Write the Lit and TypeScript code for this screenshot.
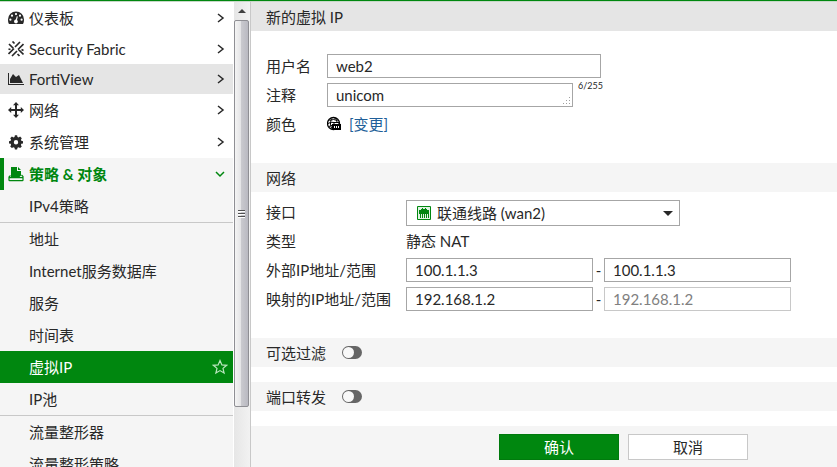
import { LitElement, html, css, svg, nothing } from "lit";
import { customElement, property, state } from "lit/decorators.js";
import { classMap } from "lit/directives/class-map.js";

const icons = {
  dashboard: svg`
    <path fill="currentColor" fill-rule="evenodd" d="M8 1.500a8 8 0 0 0-8 8c0 2 .4 3.500 1 4.500h14c.6-1 1-2.500 1-4.500a8 8 0 0 0-8-8zM8 3a1.100 1.100 0 1 1 0 2.200a1.100 1.100 0 0 1 0-2.200zM4 4.600a1.100 1.100 0 1 1 0 2.200a1.100 1.100 0 0 1 0-2.200zM12 4.600a1.100 1.100 0 1 1 0 2.200a1.100 1.100 0 0 1 0-2.200zM2.400 8.600a1.100 1.100 0 1 1 0 2.200a1.100 1.100 0 0 1 0-2.200zM13.600 8.600a1.100 1.100 0 1 1 0 2.200a1.100 1.100 0 0 1 0-2.200zM8.800 6.200l1 .3-.8 3.400a1.900 1.900 0 1 1-1.200-.3z"/>`,
  fabric: svg`
    <g stroke="currentColor" stroke-width="1.700" fill="none">
      <path d="M12 1L7 6M15.500 3L10 8.500M6 7.500L.5 13M9 10L4 15M1 3l4.500 4.500M4.500 .5l2 2M10.500 8.500L15.500 13.500M9.500 13l2 2M13.500 8.500l2 1M.5 8l2 .5"/>
    </g>`,
  chart: svg`
    <path fill="currentColor" d="M0 2h1v11h15v1H0zM2 12V8l3-5 3 3 3-2 4 8z"/>`,
  move: svg`
    <path fill="currentColor" d="M8 0l3 3.200H9V7h3.800V5L16 8l-3.200 3V9H9v3.800h2L8 16l-3-3.200h2V9H3.200v2L0 8l3.200-3v2H7V3.200H5z"/>`,
  gear: svg`
    <path fill="currentColor" fill-rule="evenodd" d="M6.900 1.200h2.200l.4 1.700 1.100.5 1.500-.9 1.700 1.700-.9 1.500.4 1.100 1.700.4v2.200l-1.700.4-.4 1.100.9 1.500-1.700 1.700-1.500-.9-1.100.5-.4 1.700H6.900l-.4-1.700-1.100-.5-1.500.9-1.700-1.700.9-1.500-.4-1.100L1 9.400V7.200l1.700-.4.4-1.100-.9-1.500 1.700-1.700 1.500.9 1.100-.5zM8 6.100a2.200 2.200 0 1 0 0 4.400 2.200 2.200 0 0 0 0-4.400z"/>`,
  policy: svg`
    <path fill="currentColor" d="M3 1h6v4h4v4.500l-1.500 1.500H3zM10 1l3 3h-3z"/>
    <path fill="none" stroke="currentColor" stroke-width="1.200" d="M2.500 9.500L1 11v3q0 .6.600.6h12.800q.6 0 .6-.6v-3.500L13.500 9M1 11.600h14"/>`,
};

type IconName = keyof typeof icons;

interface NavItem {
  label: string;
  icon: IconName;
  latin?: boolean;
  hover?: boolean;
}

interface SubItem {
  label: string;
  divider?: boolean;
}

const NAV: NavItem[] = [
  { label: "仪表板", icon: "dashboard" },
  { label: "Security Fabric", icon: "fabric", latin: true },
  { label: "FortiView", icon: "chart", latin: true, hover: true },
  { label: "网络", icon: "move" },
  { label: "系统管理", icon: "gear" },
];

const SUB: SubItem[] = [
  { label: "IPv4策略", divider: true },
  { label: "地址" },
  { label: "Internet服务数据库" },
  { label: "服务" },
  { label: "时间表" },
  { label: "虚拟IP" },
  { label: "IP池", divider: true },
  { label: "流量整形器" },
  { label: "流量整形策略" },
];

const base = css`
  * {
    box-sizing: border-box;
  }
  a {
    color: inherit;
    text-decoration: none;
  }
  button,
  input,
  select,
  textarea {
    font: inherit;
    color: inherit;
    margin: 0;
    border-radius: 0;
  }
`;

@customElement("side-nav")
export class SideNav extends LitElement {
  static styles = [
    base,
    css`
      :host {
        display: flex;
        overflow: hidden;
      }
      nav {
        flex: 1;
        min-width: 0;
        overflow: hidden;
        background: #ffffff;
      }
      ul {
        list-style: none;
        margin: 0;
        padding: 0;
      }
      .row {
        display: flex;
        align-items: center;
        height: 32px;
        padding: 0 8px;
        gap: 5px;
      }
      .latin {
        height: 30px;
      }
      .hover {
        background: #e5e5e5;
      }
      .icon {
        width: 16px;
        height: 16px;
        flex: none;
      }
      .label {
        flex: 1;
        white-space: nowrap;
      }
      .chevron {
        width: 8px;
        height: 10px;
        flex: none;
      }
      .chevron-down {
        width: 10px;
        height: 8px;
        flex: none;
      }
      .group {
        background: #f5f5f5;
      }
      .open {
        color: #00870f;
        font-weight: 700;
        border-left: 4px solid #00870f;
        padding-left: 4px;
      }
      .sub {
        padding: 0 4px 0 29px;
      }
      .divider {
        border-bottom: 1px solid #c8c8c8;
      }
      .selected {
        background: #00870f;
        color: #ffffff;
      }
      .star {
        border: 0;
        padding: 0;
        background: none;
        width: 18px;
        height: 18px;
        display: flex;
        align-items: center;
        justify-content: center;
      }
      .bar {
        width: 17px;
        flex: none;
        display: flex;
        flex-direction: column;
        padding: 0 1px;
        background: linear-gradient(90deg, #ffffff 0 1px, #e6e6e6 1px, #f2f2f2);
      }
      .arrow {
        height: 18px;
        display: flex;
        align-items: center;
        justify-content: center;
      }
      .track {
        flex: 1;
        padding-bottom: 60px;
        display: flex;
      }
      .thumb {
        flex: 1;
        display: flex;
        align-items: center;
        justify-content: center;
        border: 1px solid #8f8f94;
        border-radius: 2px;
        background: linear-gradient(90deg, #f4f4f4, #e4e4e6 45%, #c9c9ce 50%, #b9b9c1);
      }
    `,
  ];

  @state() private current = "虚拟IP";

  render() {
    return html`
      <nav aria-label="主菜单">
        <ul>
          ${NAV.map(
            (item) => html`<li>
              <a
                href="#"
                class=${classMap({ row: true, latin: !!item.latin, hover: !!item.hover })}
              >
                <svg class="icon" viewBox="0 0 16 16" aria-hidden="true">${icons[item.icon]}</svg>
                <span class="label">${item.label}</span>
                <svg class="chevron" viewBox="0 0 8 10" aria-hidden="true">
                  <path d="M1 1l5 4-5 4" fill="none" stroke="currentColor" stroke-width="1.500" />
                </svg>
              </a>
            </li>`
          )}
          <li class="group">
            <a href="#" class="row open" aria-expanded="true">
              <svg class="icon" viewBox="0 0 16 16" aria-hidden="true">${icons.policy}</svg>
              <span class="label">策略 &amp; 对象</span>
              <svg class="chevron-down" viewBox="0 0 10 8" aria-hidden="true">
                <path d="M1 2l4 4 4-4" fill="none" stroke="currentColor" stroke-width="1.500" />
              </svg>
            </a>
            <ul>
              ${SUB.map((item) => this.renderSub(item))}
            </ul>
          </li>
        </ul>
      </nav>
      <div class="bar" aria-hidden="true">
        <div class="arrow">
          <svg width="8" height="4" viewBox="0 0 8 4"><path d="M4 0l4 4H0z" fill="#404040" /></svg>
        </div>
        <div class="track">
          <div class="thumb">
            <svg width="7" height="8" viewBox="0 0 7 8">
              <path d="M0 .5h7M0 3.500h7M0 6.500h7" stroke="#505050" />
              <path d="M0 1.500h7M0 4.500h7M0 7.500h7" stroke="#ffffff" />
            </svg>
          </div>
        </div>
      </div>
    `;
  }

  private renderSub(item: SubItem) {
    const selected = item.label === this.current;
    return html`<li class=${classMap({ divider: !!item.divider })}>
      <div class=${classMap({ row: true, sub: true, selected })}>
        <a
          href="#"
          class="label"
          @click=${(e: Event) => {
            e.preventDefault();
            this.current = item.label;
          }}
          >${item.label}</a
        >
        ${selected
          ? html`<button class="star" aria-label="收藏">
              <svg width="16" height="16" viewBox="0 0 16 16">
                <path
                  d="M8 1.500l1.900 4.400 4.700.4-3.600 3.100 1.100 4.700L8 11.600l-4.100 2.500L5 9.400 1.400 6.300l4.700-.4z"
                  fill="none"
                  stroke="#b9e6be"
                  stroke-width="1.200"
                />
              </svg>
            </button>`
          : nothing}
      </div>
    </li>`;
  }
}

@customElement("vip-form")
export class VipForm extends LitElement {
  static styles = [
    base,
    css`
      :host {
        display: block;
        background: #ffffff;
      }
      form {
        display: flex;
        flex-direction: column;
        min-height: 100%;
      }
      h1,
      h2 {
        margin: 0;
        font-size: 15px;
        font-weight: 400;
      }
      .title,
      .section {
        height: 29px;
        display: flex;
        align-items: center;
        padding: 0 15px;
        background: #f5f5f5;
      }
      .title {
        background: #e5e5e5;
      }
      .basic,
      .network {
        display: grid;
        grid-auto-rows: 24px;
        row-gap: 5px;
        align-items: center;
        padding: 0 15px;
      }
      .basic {
        grid-template-columns: 61px 1fr;
        padding-top: 23px;
        padding-bottom: 27px;
      }
      .network {
        grid-template-columns: 140px 1fr;
        padding-top: 8px;
        padding-bottom: 27px;
      }
      .text {
        display: block;
        width: 274px;
        height: 24px;
        padding: 0 8px;
        border: 1px solid #a6a6a6;
        background: #ffffff;
        outline: 0;
      }
      .line {
        display: flex;
        align-items: center;
      }
      .comment {
        align-items: flex-start;
        gap: 5px;
      }
      .area {
        position: relative;
        width: 246px;
      }
      textarea.text {
        width: 100%;
        line-height: 22px;
        resize: none;
        overflow: hidden;
      }
      .grip {
        position: absolute;
        right: 2px;
        bottom: 2px;
      }
      .count {
        font-size: 9px;
        line-height: 6px;
      }
      .color {
        gap: 8px;
      }
      .change {
        color: #1f5f99;
      }
      .picker {
        position: relative;
        width: 274px;
        align-self: start;
      }
      .picker select {
        display: block;
        width: 100%;
        height: 26px;
        padding: 0 30px;
        border: 1px solid #a6a6a6;
        background: #ffffff;
        appearance: none;
      }
      .port {
        position: absolute;
        left: 11px;
        top: 6px;
        pointer-events: none;
      }
      .caret {
        position: absolute;
        right: 7px;
        top: 11px;
        pointer-events: none;
      }
      .range .text {
        width: 187px;
      }
      .dash {
        width: 11px;
        text-align: center;
      }
      .range .text:disabled {
        color: #808080;
        border-color: #c8c8c8;
      }
      .option {
        gap: 16px;
        margin-bottom: 15px;
      }
      .switch {
        appearance: none;
        width: 20px;
        height: 13px;
        padding: 1px;
        border-radius: 7px;
        background: #666666;
        display: flex;
      }
      .switch::before {
        content: "";
        width: 11px;
        height: 11px;
        border-radius: 50%;
        background: #f8f8f8;
      }
      .switch:checked {
        background: #00870f;
        justify-content: flex-end;
      }
      .actions {
        flex: 1;
        display: flex;
        align-items: flex-start;
        gap: 9px;
        padding: 8px 15px 8px 248px;
        background: #f5f5f5;
      }
      .button {
        width: 120px;
        height: 26px;
        padding: 0;
        border: 1px solid #c8c8c8;
        background: #ffffff;
      }
      .primary {
        border-color: #007a0d;
        background: #00870f;
        color: #ffffff;
      }
    `,
  ];

  @property() comment = "unicom";

  render() {
    return html`
      <form @submit=${(e: Event) => e.preventDefault()}>
        <div class="title"><h1>新的虚拟 IP</h1></div>
        <div class="basic">
          <label for="name">用户名</label>
          <input id="name" class="text" type="text" .value=${"web2"} />
          <label for="comment">注释</label>
          <div class="line comment">
            <div class="area">
              <textarea
                id="comment"
                class="text"
                rows="1"
                maxlength="255"
                .value=${this.comment}
                @input=${(e: Event) => (this.comment = (e.target as HTMLTextAreaElement).value)}
              ></textarea>
              <svg class="grip" width="9" height="9" viewBox="0 0 9 9" aria-hidden="true">
                <path
                  fill="#a0a0a0"
                  d="M7 1h1v1H7zM7 4h1v1H7zM7 7h1v1H7zM4 4h1v1H4zM4 7h1v1H4zM1 7h1v1H1z"
                />
              </svg>
            </div>
            <span class="count">${this.comment.length}/255</span>
          </div>
          <span>颜色</span>
          <div class="line color">
            <svg width="14" height="16" viewBox="0 0 14 16" aria-hidden="true">
              <circle cx="6.500" cy="7.500" r="6" fill="#ffffff" stroke="#000000" stroke-width="1.300" />
              <path
                d="M2.500 4.500Q6.500 2.500 10.500 4.500M1 7.500Q4 5.500 7 6.500M2 10.500q2-1 3-1M4.500 3C3 6 3 10 5.500 13.500M7 1.500c2 1 3 3 3 5"
                fill="none"
                stroke="#000000"
              />
              <path d="M5 8h9v6H5z" fill="#000000" />
              <path d="M7 8V6.500h5V8" fill="none" stroke="#000000" />
              <path d="M7 10h1v2H7zM9 10h1v2H9zM11 10h1v2h-1z" fill="#ffffff" />
            </svg>
            <a class="change" href="#">[变更]</a>
          </div>
        </div>

        <div class="section"><h2>网络</h2></div>
        <div class="network">
          <label for="port">接口</label>
          <div class="picker">
            <select id="port">
              <option>联通线路 (wan2)</option>
            </select>
            <svg class="port" width="14" height="14" viewBox="0 0 14 14" aria-hidden="true">
              <path d="M.5.500h13v13H.5z" fill="#e0f2e2" stroke="#00870f" />
              <path d="M2 4h2V3h1V2h1v1h2V2h1v1h1v1h2v8h-1V8h-1v4H9V8H8v4H7V8H6v4H5V8H4v4H3V8H2z" fill="#00870f" />
            </svg>
            <svg class="caret" width="10" height="5" viewBox="0 0 10 5" aria-hidden="true">
              <path d="M0 0h10L5 5z" fill="#282828" />
            </svg>
          </div>
          <span>类型</span>
          <span>静态 NAT</span>
          <label for="ext-from">外部IP地址/范围</label>
          <div class="line range">
            <input id="ext-from" class="text" type="text" .value=${"100.1.1.3"} />
            <span class="dash">-</span>
            <input class="text" type="text" aria-label="外部IP范围结束" .value=${"100.1.1.3"} />
          </div>
          <label for="map-from">映射的IP地址/范围</label>
          <div class="line range">
            <input id="map-from" class="text" type="text" .value=${"192.168.1.2"} />
            <span class="dash">-</span>
            <input
              class="text"
              type="text"
              disabled
              aria-label="映射的IP范围结束"
              .value=${"192.168.1.2"}
            />
          </div>
        </div>

        <div class="section option">
          <label for="filter">可选过滤</label>
          <input id="filter" class="switch" type="checkbox" role="switch" />
        </div>
        <div class="section option">
          <label for="forward">端口转发</label>
          <input id="forward" class="switch" type="checkbox" role="switch" />
        </div>
        <div class="actions">
          <button class="button primary" type="submit">确认</button>
          <button class="button" type="button">取消</button>
        </div>
      </form>
    `;
  }
}

@customElement("app-root")
export class AppRoot extends LitElement {
  static styles = css`
    :host {
      display: grid;
      grid-template-columns: 250px 1fr;
      grid-template-rows: 100%;
      box-sizing: border-box;
      height: 100vh;
      overflow: hidden;
      border-top: 1px solid #00870f;
      color: #282828;
      font: 15px/24px Lato, "Noto Sans CJK SC", sans-serif;
    }
    side-nav,
    vip-form {
      border-top: 1px solid #c8d8c8;
    }
    vip-form {
      border-left: 1px solid #c8c8c8;
      overflow: hidden;
    }
  `;

  render() {
    return html`<side-nav></side-nav><vip-form></vip-form>`;
  }
}
